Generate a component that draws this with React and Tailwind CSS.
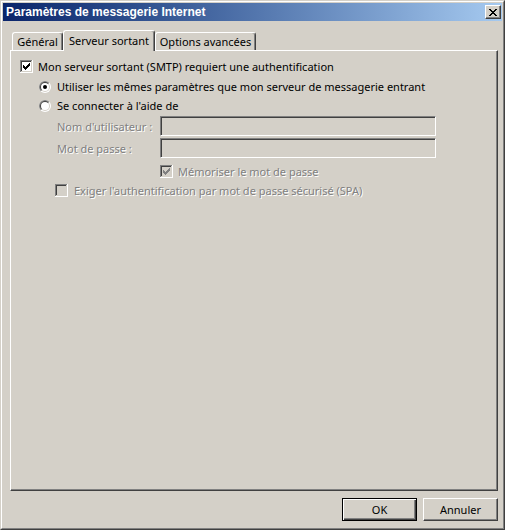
import React from 'react'

const CHECK_COLS = [
    [3, 5], [4, 6], [5, 7], [6, 6], [7, 5], [8, 4], [9, 3],
]

function CheckBox({ checked, disabled }) {
    const inner = disabled ? '#d4d0c8' : '#ffffff'
    const mark = disabled ? '#808080' : '#000000'
    return (
        <svg width="13" height="13" viewBox="0 0 13 13" className="shrink-0" shapeRendering="crispEdges">
            <rect x="0" y="0" width="13" height="13" fill="#ffffff" />
            <rect x="0" y="0" width="12" height="12" fill="#808080" />
            <rect x="1" y="1" width="11" height="11" fill="#d4d0c8" />
            <rect x="1" y="1" width="10" height="10" fill="#404040" />
            <rect x="2" y="2" width="9" height="9" fill={inner} />
            {checked && CHECK_COLS.map(([x, y]) => (
                <rect key={x} x={x} y={y} width="1" height="3" fill={mark} />
            ))}
        </svg>
    )
}

function Radio({ checked }) {
    // classic sunken radio button
    return (
        <svg width="12" height="12" viewBox="0 0 12 12" className="shrink-0">
            <circle cx="6" cy="6" r="6" fill="#ffffff" />
            <path d="M1.757 10.243 A6 6 0 0 1 10.243 1.757 Z" fill="#808080" />
            <circle cx="6" cy="6" r="5" fill="#d4d0c8" />
            <path d="M2.464 9.536 A5 5 0 0 1 9.536 2.464 Z" fill="#404040" />
            <circle cx="6" cy="6" r="4" fill="#ffffff" />
            {checked && <circle cx="6" cy="6" r="2" fill="#000000" />}
        </svg>
    )
}

const muted = "text-[#808080] [text-shadow:1px_1px_0_#ffffff]"

function Field({ label }) {
    return (
        <div className="flex items-center h-[20px]">
            <span className={`w-[103px] whitespace-nowrap ${muted}`}>{label}</span>
            <div className="w-[276px] h-[20px] bg-[#d4d0c8] border border-t-[#808080] border-l-[#808080] border-r-white border-b-white shadow-[inset_1px_1px_0_#404040]"></div>
        </div>
    )
}

function Tab({ label, width, active }) {
    return (
        <div
            className={`flex items-center justify-center whitespace-nowrap bg-[#d4d0c8] rounded-t-[3px] border-t border-l border-r border-t-white border-l-white border-r-[#404040] shadow-[inset_-1px_0_0_#808080] ${active ? 'h-[21px] -mb-px relative z-10 pb-[2px]' : 'h-[18px]'}`}
            style={{ width }}
        >
            {label}
        </div>
    )
}

export default function App() {
    return (
        <div className="w-[505px] h-[530px] bg-[#d4d0c8] border border-t-[#d4d0c8] border-l-[#d4d0c8] border-r-[#404040] border-b-[#404040] font-['Noto_Sans',sans-serif] text-[11px] text-black leading-none">
            <div className="h-full border border-t-white border-l-white border-r-[#808080] border-b-[#808080] p-px flex flex-col">
                {/* Title bar */}
                <div className="h-[18px] flex items-center justify-between pl-[3px] pr-[1px] bg-gradient-to-r from-[#0a246a] to-[#a6caf0]">
                    <span className="text-white font-bold text-[12px] font-['Liberation_Sans',sans-serif]">
                        Paramètres de messagerie Internet
                    </span>
                    <div className="w-[16px] h-[14px] flex items-center justify-center bg-[#d4d0c8] border border-t-white border-l-white border-r-[#404040] border-b-[#404040] shadow-[inset_-1px_-1px_0_#808080]">
                        <svg width="8" height="7" viewBox="0 0 8 7" shapeRendering="crispEdges">
                            <path d="M0 0h2v1h-2z M6 0h2v1h-2z M1 1h2v1h-2z M5 1h2v1h-2z M2 2h4v1h-4z M3 3h2v1h-2z M2 4h4v1h-4z M1 5h2v1h-2z M5 5h2v1h-2z M0 6h2v1h-2z M6 6h2v1h-2z" fill="#000" />
                        </svg>
                    </div>
                </div>

                <div className="pl-[7px] pt-[9px]">
                    {/* Tabs */}
                    <div className="flex items-end h-[20px] pl-[2px]">
                        <Tab label="Général" width={51} />
                        <Tab label="Serveur sortant" width={92} active />
                        <Tab label="Options avancées" width={101} />
                    </div>

                    {/* Panel */}
                    <div className="w-[488px] h-[441px] border border-t-white border-l-white border-r-[#404040] border-b-[#404040] shadow-[inset_-1px_-1px_0_#808080] pt-[6px] pl-[9px] whitespace-nowrap">
                        <div className="flex items-center h-[19px] gap-[5px]">
                            <CheckBox checked />
                            <span>Mon serveur sortant (SMTP) requiert une authentification</span>
                        </div>
                        <div className="flex items-center h-[19px] mt-[1px] pl-[19px] gap-[6px]">
                            <Radio checked />
                            <span>Utiliser les mêmes paramètres que mon serveur de messagerie entrant</span>
                        </div>
                        <div className="flex items-center h-[19px] pl-[19px] gap-[6px]">
                            <Radio />
                            <span>Se connecter à l'aide de</span>
                        </div>
                        <div className="pl-[37px] mt-[1px] flex flex-col gap-[2px]">
                            <Field label="Nom d'utilisateur :" />
                            <Field label="Mot de passe :" />
                        </div>
                        <div className="flex items-center h-[19px] mt-[4px] pl-[140px] gap-[5px]">
                            <CheckBox checked disabled />
                            <span className={muted}>Mémoriser le mot de passe</span>
                        </div>
                        <div className="flex items-center h-[19px] pl-[35px] gap-[6px]">
                            <CheckBox disabled />
                            <span className={muted}>Exiger l'authentification par mot de passe sécurisé (SPA)</span>
                        </div>
                    </div>

                    {/* Buttons */}
                    <div className="w-[488px] flex justify-end gap-[6px] mt-[7px]">
                        <button className="w-[75px] h-[23px] bg-[#d4d0c8] border border-black shadow-[inset_1px_1px_0_#ffffff,inset_-1px_-1px_0_#404040,inset_-2px_-2px_0_#808080]">
                            OK
                        </button>
                        <button className="w-[75px] h-[23px] bg-[#d4d0c8] border border-t-white border-l-white border-r-[#404040] border-b-[#404040] shadow-[inset_-1px_-1px_0_#808080]">
                            Annuler
                        </button>
                    </div>
                </div>
            </div>
        </div>
    )
}
